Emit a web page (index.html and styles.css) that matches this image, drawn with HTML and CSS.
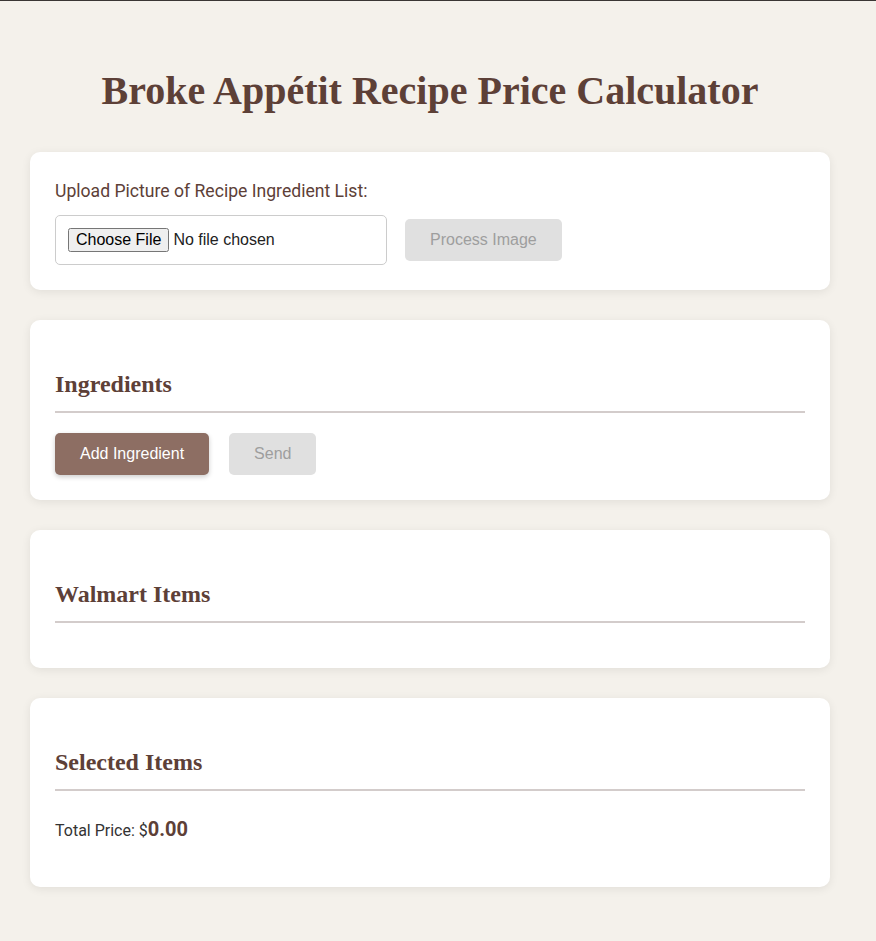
FILE: index.html
```html
<!DOCTYPE html>
<html lang="en">
<head>
<meta charset="utf-8">
<title>Broke Appétit Recipe Price Calculator</title>
<link rel="stylesheet" href="styles.css">
</head>
<body>
<div class="topline"></div>
<main class="container">
  <h1 class="title">Broke Appétit Recipe Price Calculator</h1>

  <section class="card upload-card">
    <label class="upload-label" for="file">Upload Picture of Recipe Ingredient List:</label>
    <div class="upload-row">
      <input type="file" id="file" class="file-input">
      <button class="btn btn-disabled" disabled>Process Image</button>
    </div>
  </section>

  <section class="card">
    <h2 class="card-title">Ingredients</h2>
    <div class="btn-row">
      <button class="btn btn-primary">Add Ingredient</button>
      <button class="btn btn-disabled" disabled>Send</button>
    </div>
  </section>

  <section class="card">
    <h2 class="card-title">Walmart Items</h2>
  </section>

  <section class="card">
    <h2 class="card-title">Selected Items</h2>
    <p class="total">Total Price: $<strong class="total-amount">0.00</strong></p>
  </section>
</main>
</body>
</html>
```
FILE: styles.css
```css
html, body {
  margin: 0;
  padding: 0;
}
body {
  background: #f4f1eb;
  font-family: Roboto, "Liberation Sans", Arial, sans-serif;
  color: #333;
  min-height: 941px;
}
.topline {
  height: 1px;
  background: #3a3634;
}
.container {
  width: 800px;
  margin: 0 0 0 30px;
  padding-bottom: 40px;
}
.title {
  font-family: "Liberation Serif", "Times New Roman", serif;
  font-weight: bold;
  font-size: 40px;
  color: #5d4037;
  text-align: center;
  margin: 0;
  padding: 66px 0 37px;
  line-height: 48px;
}
.card {
  background: #fff;
  border-radius: 10px;
  box-shadow: 0 2px 10px rgba(0, 0, 0, 0.08);
  padding: 25px;
  margin-bottom: 30px;
}
.upload-label {
  display: block;
  font-size: 17.6px;
  color: #5d4037;
  line-height: 25px;
  padding-top: 2px;
  margin-bottom: 11px;
}
.upload-row {
  display: flex;
  align-items: center;
  gap: 18px;
}
.file-input {
  width: 332px;
  box-sizing: border-box;
  border: 1px solid #ccc;
  border-radius: 5px;
  padding: 12px;
  font-family: "Liberation Sans", Arial, sans-serif;
  font-size: 16px;
  color: #222;
  background: #fff;
}
.btn {
  font-family: "Liberation Sans", Arial, sans-serif;
  font-size: 16px;
  height: 42px;
  border: none;
  border-radius: 5px;
  padding: 0 25px;
}
.btn-disabled {
  background: #e0e0e0;
  color: #9e9e9e;
}
.btn-primary {
  background: #8d6e63;
  color: #fff;
  box-shadow: 0 2px 5px rgba(0, 0, 0, 0.2);
}
.card-title {
  font-family: "Liberation Serif", "Times New Roman", serif;
  font-weight: bold;
  font-size: 24px;
  color: #5d4037;
  margin: 25px 0 20px;
  line-height: 29px;
  padding-bottom: 12px;
  border-bottom: 2px solid #d3cccb;
}
.btn-row {
  display: flex;
  gap: 20px;
}
.total {
  margin: 0 0 13px;
  font-size: 16px;
  color: #333;
  line-height: 36px;
}
.total-amount {
  font-size: 20px;
  color: #5d4037;
}
```
